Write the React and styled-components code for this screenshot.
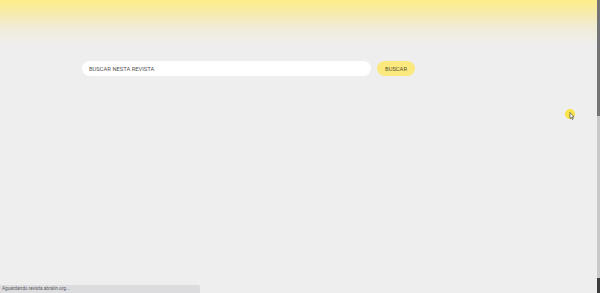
import React from 'react'
import styled, { createGlobalStyle } from 'styled-components'

const Global = createGlobalStyle`
  html, body { margin: 0; padding: 0; height: 100%; overflow: hidden; }
  body { background: #efeeef; font-family: Roboto, "Noto Sans", sans-serif; }
  #root { height: 100%; }
`

const Page = styled.div`
  position: relative;
  height: 293px;
  background: linear-gradient(to bottom, #fdee88 0px, #f6eab0 14px, #f1ecd8 28px, #efeeef 46px, #efeeef 100%);
`

const SearchRow = styled.form`
  display: flex;
  align-items: center;
  gap: 6px;
  padding: 61px 0 0 82px;
`

const Input = styled.div`
  width: 289px;
  height: 15px;
  box-sizing: border-box;
  background: #fff;
  border-radius: 8px;
  display: flex;
  align-items: center;
  padding-left: 7px;
  font-size: 5.8px;
  color: #555;
`

const Button = styled.div`
  width: 38px;
  height: 15px;
  border-radius: 8px;
  background: #fbe87f;
  display: flex;
  align-items: center;
  justify-content: center;
  font-size: 5.8px;
  color: #57532f;
`

const Scrollbar = styled.div`
  position: absolute;
  top: 0;
  right: 0;
  width: 3px;
  height: 293px;
  background: #c9c8cb;
  &::before {
    content: '';
    position: absolute;
    top: 0;
    left: 0;
    width: 3px;
    height: 116px;
    background: #747376;
  }
  &::after {
    content: '';
    position: absolute;
    bottom: 0;
    left: 0;
    width: 3px;
    height: 15px;
    background: #3c3b3e;
  }
`

const Cursor = styled.div`
  position: absolute;
  left: 565px;
  top: 109px;
  width: 10px;
  height: 10px;
  border-radius: 50%;
  background: rgba(250, 225, 40, 0.85);
`

const Pointer = styled.svg`
  position: absolute;
  left: 569px;
  top: 112px;
`

const Status = styled.div`
  position: absolute;
  left: 0;
  bottom: 0;
  width: 200px;
  height: 8px;
  background: #dcdcdf;
  border-top-right-radius: 2px;
  font-size: 4.7px;
  line-height: 8px;
  color: #5a5a60;
  padding-left: 2px;
  box-sizing: border-box;
`

export default function App() {
  return (
    <>
      <Global />
      <Page>
        <SearchRow onSubmit={e => e.preventDefault()}>
          <Input>BUSCAR NESTA REVISTA</Input>
          <Button>BUSCAR</Button>
        </SearchRow>
        <Cursor />
        <Pointer width="6" height="8" viewBox="0 0 6 8">
          <path d="M1 0.5 L1 6.5 L2.3 5.3 L3.3 7.5 L4.2 7 L3.3 5 L5 5 Z" fill="#fff" stroke="#333" strokeWidth="0.6" />
        </Pointer>
        <Status>Aguardando revista.abralin.org...</Status>
        <Scrollbar />
      </Page>
    </>
  )
}
